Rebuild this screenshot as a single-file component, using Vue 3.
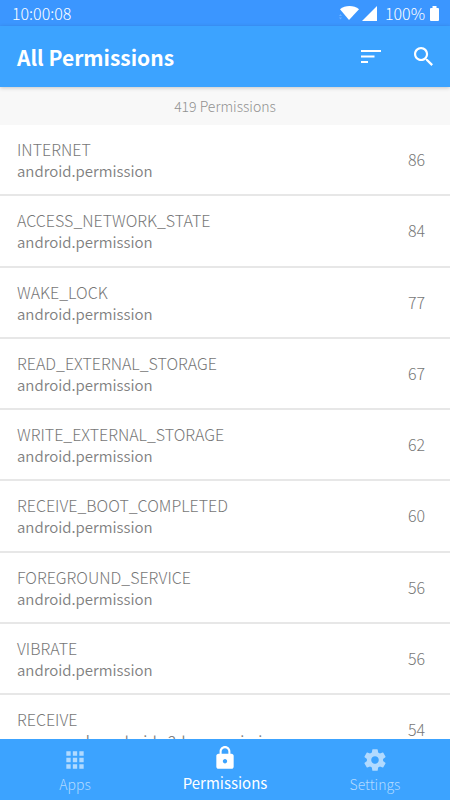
<script setup>
import { ref } from 'vue'

const permissions = [
  { name: 'INTERNET', group: 'android.permission', count: 86 },
  { name: 'ACCESS_NETWORK_STATE', group: 'android.permission', count: 84 },
  { name: 'WAKE_LOCK', group: 'android.permission', count: 77 },
  { name: 'READ_EXTERNAL_STORAGE', group: 'android.permission', count: 67 },
  { name: 'WRITE_EXTERNAL_STORAGE', group: 'android.permission', count: 62 },
  { name: 'RECEIVE_BOOT_COMPLETED', group: 'android.permission', count: 60 },
  { name: 'FOREGROUND_SERVICE', group: 'android.permission', count: 56 },
  { name: 'VIBRATE', group: 'android.permission', count: 56 },
  { name: 'RECEIVE', group: 'com.google.android.c2dm.permission', count: 54 },
]

const tabs = [
  {
    label: 'Apps',
    icon: 'M4 8h4V4H4v4zm6 12h4v-4h-4v4zm-6 0h4v-4H4v4zm0-6h4v-4H4v4zm6 0h4v-4h-4v4zm6-10v4h4V4h-4zm-6 4h4V4h-4v4zm6 6h4v-4h-4v4zm0 6h4v-4h-4v4z',
  },
  {
    label: 'Permissions',
    icon: 'M18 8h-1V6c0-2.76-2.24-5-5-5S7 3.24 7 6v2H6c-1.1 0-2 .9-2 2v10c0 1.1.9 2 2 2h12c1.1 0 2-.9 2-2V10c0-1.1-.9-2-2-2zm-6 9c-1.1 0-2-.9-2-2s.9-2 2-2 2 .9 2 2-.9 2-2 2zm3.1-9H8.9V6c0-1.71 1.39-3.1 3.1-3.1s3.1 1.39 3.1 3.1v2z',
  },
  {
    label: 'Settings',
    icon: 'M19.43 12.98c.04-.32.07-.64.07-.98s-.03-.66-.07-.98l2.11-1.65c.19-.15.24-.42.12-.64l-2-3.46c-.12-.22-.39-.3-.61-.22l-2.49 1c-.52-.4-1.08-.73-1.69-.98l-.38-2.65C14.46 2.18 14.25 2 14 2h-4c-.25 0-.46.18-.49.42l-.38 2.65c-.61.25-1.17.59-1.69.98l-2.49-1c-.23-.09-.49 0-.61.22l-2 3.46c-.13.22-.07.49.12.64l2.11 1.65c-.04.32-.07.65-.07.98s.03.66.07.98l-2.11 1.65c-.19.15-.24.42-.12.64l2 3.46c.12.22.39.3.61.22l2.49-1c.52.4 1.08.73 1.69.98l.38 2.65c.03.24.24.42.49.42h4c.25 0 .46-.18.49-.42l.38-2.65c.61-.25 1.17-.59 1.69-.98l2.49 1c.23.09.49 0 .61-.22l2-3.46c.12-.22.07-.49-.12-.64l-2.11-1.65zM12 15.5c-1.93 0-3.5-1.57-3.5-3.5s1.57-3.5 3.5-3.5 3.5 1.57 3.5 3.5-1.57 3.5-3.5 3.5z',
  },
]

const activeTab = ref('Permissions')
</script>

<template>
  <div class="app">
    <div class="status-bar">
      <span class="clock">10:00:08</span>
      <div class="status-icons">
        <svg class="wifi" viewBox="0 0 20 16" aria-hidden="true">
          <path d="M10 15 1 4.300C6-.1 15-.1 20 4.300z" fill="#fff" />
          <path d="M0 11l1.500-2L3 11zM0 12.500h3l-1.500 2z" fill="#6fb0ff" />
        </svg>
        <svg class="signal" viewBox="0 0 15 15" aria-hidden="true">
          <path d="M15 0v15H0z" fill="#fff" />
        </svg>
        <span class="percent">100%</span>
        <svg class="battery" viewBox="0 0 9 15" aria-hidden="true">
          <path d="M2.500 0h4v2H8q1 0 1 1v11q0 1-1 1H1q-1 0-1-1V3q0-1 1-1h1.500z" fill="#fff" />
        </svg>
      </div>
    </div>

    <header class="toolbar">
      <h1>All Permissions</h1>
      <button class="tool" type="button" aria-label="Sort">
        <svg class="sort-icon" viewBox="0 0 20 14" aria-hidden="true">
          <path d="M0 0h20v2H0zM0 5.500h13.500v2H0zM0 11h7v2H0z" fill="#fff" />
        </svg>
      </button>
      <button class="tool" type="button" aria-label="Search">
        <svg class="search-icon" viewBox="3 3 17.500 17.500" aria-hidden="true">
          <path d="M15.500 14h-.79l-.28-.27C15.410 12.590 16 11.110 16 9.500 16 5.910 13.090 3 9.500 3S3 5.910 3 9.500 5.910 16 9.500 16c1.610 0 3.090-.59 4.230-1.570l.27.28v.79l5 4.990L20.490 19l-4.990-5zm-6 0C7.010 14 5 11.990 5 9.500S7.010 5 9.500 5 14 7.010 14 9.500 11.990 14 9.500 14z" fill="#fff" />
        </svg>
      </button>
    </header>

    <p class="summary">419 Permissions</p>

    <ul class="list">
      <li v-for="p in permissions" :key="p.name" class="row">
        <div class="text">
          <span class="name">{{ p.name }}</span>
          <span class="group">{{ p.group }}</span>
        </div>
        <span class="count">{{ p.count }}</span>
      </li>
    </ul>

    <nav class="tabs">
      <button
        v-for="t in tabs"
        :key="t.label"
        type="button"
        class="tab"
        :class="{ active: t.label === activeTab }"
        @click="activeTab = t.label"
      >
        <svg viewBox="0 0 24 24" aria-hidden="true"><path :d="t.icon" fill="currentColor" /></svg>
        <span>{{ t.label }}</span>
      </button>
    </nav>
  </div>
</template>

<style>
body {
  margin: 0;
  background: #fff;
}
</style>

<style scoped>
.app {
  display: flex;
  flex-direction: column;
  height: 100vh;
  overflow: hidden;
  font-family: "Noto Sans CJK SC", "Noto Sans", sans-serif;
  font-weight: 300;
  color: #777;
}

.status-bar {
  flex: none;
  display: flex;
  align-items: center;
  justify-content: space-between;
  height: 26px;
  padding: 0 11px 0 12px;
  background: #3b96ff;
  color: #fff;
  font-size: 16px;
  line-height: 22px;
}

.status-icons {
  display: flex;
  align-items: center;
}

.wifi {
  width: 20px;
  height: 16px;
}

.signal {
  width: 15px;
  height: 15px;
  margin-left: 3px;
}

.percent {
  margin-left: 8px;
}

.battery {
  width: 9px;
  height: 15px;
  margin-left: 5px;
}

.toolbar {
  flex: none;
  display: flex;
  align-items: center;
  gap: 33px;
  height: 61px;
  padding: 0 17px;
  background: #3ca3ff;
  box-shadow: 0 1px 4px rgba(0, 0, 0, 0.2);
  z-index: 1;
}

h1 {
  flex: 1;
  margin: 0;
  color: #fff;
  font-size: 21px;
  font-weight: 700;
  line-height: 32px;
}

.tool {
  display: flex;
  padding: 0;
  border: 0;
  background: none;
  cursor: pointer;
}

.sort-icon {
  width: 20px;
  height: 14px;
}

.search-icon {
  width: 19px;
  height: 19px;
}

.summary {
  flex: none;
  margin: 0;
  padding: 10px 0;
  background: #f8f8f8;
  color: #919191;
  font-size: 14px;
  line-height: 18px;
  text-align: center;
}

.list {
  flex: 1;
  display: flex;
  flex-direction: column;
  min-height: 0;
  margin: 0;
  padding: 0;
  overflow: hidden;
  list-style: none;
}

.row {
  flex: 1 0 70px;
  box-sizing: border-box;
  display: flex;
  justify-content: space-between;
  padding: 13px 25px 0 17px;
  border-bottom: 2px solid #e7e7e7;
  font-size: 16px;
  line-height: 22px;
}

.row:last-child {
  flex: 0 0 44px;
  min-height: 0;
  border-bottom: 0;
}

.text {
  display: flex;
  flex-direction: column;
}

.group {
  color: #808080;
  font-size: 15px;
  font-weight: 350;
}

.count {
  padding-top: 10px;
}

.tabs {
  flex: none;
  display: grid;
  grid-template-columns: repeat(3, 1fr);
  height: 61px;
  background: #3ca3ff;
}

.tab {
  display: flex;
  flex-direction: column;
  align-items: center;
  gap: 1px;
  padding: 8px 0 0;
  border: 0;
  background: none;
  color: #b1daff;
  font: inherit;
  font-size: 14px;
  line-height: 20px;
  cursor: pointer;
}

.tab svg {
  width: 26px;
  height: 26px;
}

.tab.active {
  gap: 2px;
  padding-top: 6px;
  color: #fff;
  font-size: 15px;
  font-weight: 400;
}
</style>
